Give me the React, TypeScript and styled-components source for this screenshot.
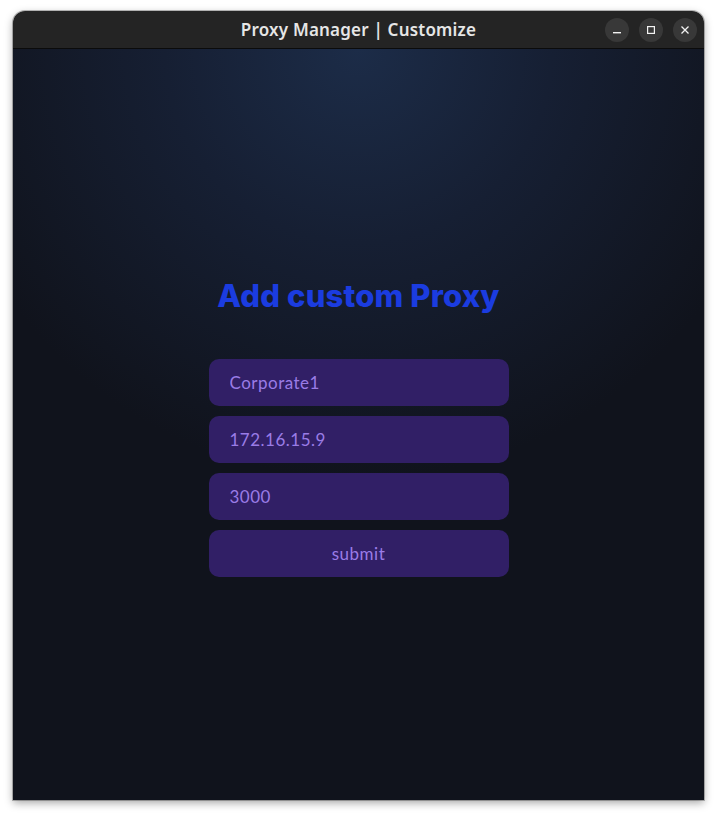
import React from "react";
import styled, { createGlobalStyle } from "styled-components";

const Global = createGlobalStyle`
  html, body { margin: 0; padding: 0; background: #ffffff; }
  #root { width: 717px; height: 816px; }
  * { box-sizing: border-box; }
`;

const Page = styled.div`
  width: 717px;
  height: 816px;
  padding: 11px 13px 16px 13px;
`;

const Window = styled.div`
  width: 691px;
  height: 789px;
  border-radius: 12px 12px 0 0;
  overflow: hidden;
  display: flex;
  flex-direction: column;
  box-shadow: 0 3px 8px rgba(0, 0, 0, 0.35), 0 0 0 1px rgba(0, 0, 0, 0.25);
`;

const TitleBar = styled.div`
  height: 38px;
  flex: none;
  background: #242424;
  border-bottom: 1px solid #0b0b0b;
  display: grid;
  grid-template-columns: 1fr auto 1fr;
  align-items: center;
  padding: 0 7px;
`;

const Title = styled.div`
  grid-column: 2;
  font-family: "Noto Sans", "Open Sans", sans-serif;
  font-weight: 600;
  font-size: 17px;
  letter-spacing: 0.2px;
  color: #e6e6e6;
`;

const Controls = styled.div`
  grid-column: 3;
  justify-self: end;
  display: flex;
  gap: 10px;
`;

const CtrlBtn = styled.div`
  width: 24px;
  height: 24px;
  border-radius: 50%;
  background: #383838;
  display: flex;
  align-items: center;
  justify-content: center;
`;

const Content = styled.div`
  flex: 1;
  background: radial-gradient(circle 430px at 50% 0, #1c2c48 0%, #161f33 45%, #10131c 100%);
  display: flex;
  flex-direction: column;
  align-items: center;
  padding-top: 227px;
`;

const Heading = styled.h1`
  margin: 0 0 43px 0;
  font-family: "Inter", "Lato", sans-serif;
  font-weight: 800;
  font-size: 31px;
  line-height: 40px;
  letter-spacing: 0.15px;
  color: #1b3ce0;
`;

const Form = styled.form`
  display: flex;
  flex-direction: column;
  gap: 10px;
  width: 300px;
`;

const Field = styled.input<{ $center?: boolean }>`
  width: 300px;
  height: 47px;
  border: none;
  outline: none;
  border-radius: 10px;
  background: #311f66;
  color: #9a7ce6;
  font-family: "Lato", "Open Sans", sans-serif;
  font-size: 17px;
  letter-spacing: 0.5px;
  padding: 0 21px;
  text-align: ${(p) => (p.$center ? "center" : "left")};
  cursor: ${(p) => (p.$center ? "pointer" : "text")};
`;

export default function App() {
  return (
    <>
      <Global />
      <Page>
        <Window>
          <TitleBar>
            <Title>Proxy Manager | Customize</Title>
            <Controls>
              <CtrlBtn>
                <svg width="10" height="10" viewBox="0 0 10 10">
                  <rect x="1" y="7" width="8" height="1.4" fill="#f2f2f2" />
                </svg>
              </CtrlBtn>
              <CtrlBtn>
                <svg width="10" height="10" viewBox="0 0 10 10">
                  <rect x="1.6" y="1.6" width="6.8" height="6.8" fill="none" stroke="#f2f2f2" strokeWidth="1.2" />
                </svg>
              </CtrlBtn>
              <CtrlBtn>
                <svg width="10" height="10" viewBox="0 0 10 10">
                  <path d="M1.5 1.5 L8.5 8.5 M8.5 1.5 L1.5 8.5" stroke="#f2f2f2" strokeWidth="1.3" />
                </svg>
              </CtrlBtn>
            </Controls>
          </TitleBar>
          <Content>
            <Heading>Add custom Proxy</Heading>
            <Form onSubmit={(e) => e.preventDefault()}>
              <Field type="text" defaultValue="Corporate1" />
              <Field type="text" defaultValue="172.16.15.9" />
              <Field type="text" defaultValue="3000" />
              <Field type="submit" value="submit" $center />
            </Form>
          </Content>
        </Window>
      </Page>
    </>
  );
}
